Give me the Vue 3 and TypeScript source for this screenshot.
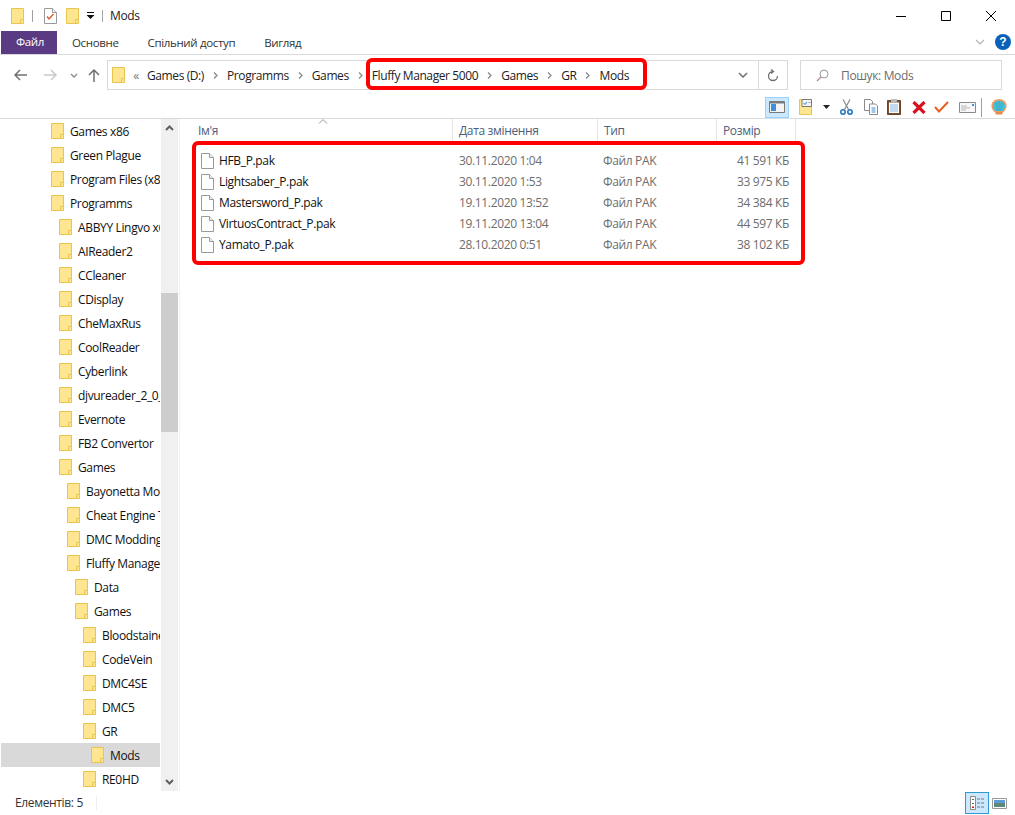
<script setup lang="ts">
// --- Données de l'explorateur ---
interface TreeItem {
  name: string
  level: number
  selected?: boolean
}

const treeItems: TreeItem[] = [
  { name: 'Games x86', level: 0 },
  { name: 'Green Plague', level: 0 },
  { name: 'Program Files (x86)', level: 0 },
  { name: 'Programms', level: 0 },
  { name: 'ABBYY Lingvo x6', level: 1 },
  { name: 'AIReader2', level: 1 },
  { name: 'CCleaner', level: 1 },
  { name: 'CDisplay', level: 1 },
  { name: 'CheMaxRus', level: 1 },
  { name: 'CoolReader', level: 1 },
  { name: 'Cyberlink', level: 1 },
  { name: 'djvureader_2_0_8', level: 1 },
  { name: 'Evernote', level: 1 },
  { name: 'FB2 Convertor', level: 1 },
  { name: 'Games', level: 1 },
  { name: 'Bayonetta Mods', level: 2 },
  { name: 'Cheat Engine Tables', level: 2 },
  { name: 'DMC Modding', level: 2 },
  { name: 'Fluffy Manager 5000', level: 2 },
  { name: 'Data', level: 3 },
  { name: 'Games', level: 3 },
  { name: 'Bloodstained', level: 4 },
  { name: 'CodeVein', level: 4 },
  { name: 'DMC4SE', level: 4 },
  { name: 'DMC5', level: 4 },
  { name: 'GR', level: 4 },
  { name: 'Mods', level: 5, selected: true },
  { name: 'RE0HD', level: 4 },
]

const files = [
  { name: 'HFB_P.pak', date: '30.11.2020 1:04', type: 'Файл PAK', size: '41 591 КБ' },
  { name: 'Lightsaber_P.pak', date: '30.11.2020 1:53', type: 'Файл PAK', size: '33 975 КБ' },
  { name: 'Mastersword_P.pak', date: '19.11.2020 13:52', type: 'Файл PAK', size: '34 384 КБ' },
  { name: 'VirtuosContract_P.pak', date: '19.11.2020 13:04', type: 'Файл PAK', size: '44 597 КБ' },
  { name: 'Yamato_P.pak', date: '28.10.2020 0:51', type: 'Файл PAK', size: '38 102 КБ' },
]

const crumbs = ['Games (D:)', 'Programms', 'Games', 'Fluffy Manager 5000', 'Games', 'GR', 'Mods']
const tabs = ['Основне', 'Спільний доступ', 'Вигляд']

// décalage de l'arborescence : 8px par niveau
function indent(level: number) {
  return { paddingLeft: `${50 + level * 8}px` }
}
</script>

<template>
  <div class="window">
    <!-- symboles réutilisés -->
    <svg class="defs" width="0" height="0">
      <symbol id="folder" viewBox="0 0 13 16">
        <path d="M.5.5h12v15H.5z" fill="#fde68f" stroke="#e9c44f" />
        <path d="M9.5 15.500v-4h3" fill="none" stroke="#e9c44f" />
      </symbol>
      <symbol id="file" viewBox="0 0 13 16">
        <path d="M.5.5h8l4 4v11H.5z" fill="#fff" stroke="#9a9a9a" />
        <path d="M8.500.5v4h4" fill="#f0f0f0" stroke="#9a9a9a" />
      </symbol>
    </svg>

    <!-- barre de titre -->
    <header class="titlebar">
      <svg class="ico-folder"><use href="#folder" /></svg>
      <span class="qsep first"></span>
      <svg class="qnote" width="13" height="16" viewBox="0 0 13 16">
        <use href="#file" />
        <path d="M3 8.500l2 2.500L9.500 6" fill="none" stroke="#e0562a" stroke-width="1.300" />
      </svg>
      <svg class="ico-folder qfolder"><use href="#folder" /></svg>
      <svg class="qdrop" width="9" height="8" viewBox="0 0 9 8">
        <path d="M1 0h7v1H1zM.5 3h8L4.500 7z" fill="#111" />
      </svg>
      <span class="qsep second"></span>
      <span class="title">Mods</span>
      <div class="winctl">
        <svg width="12" height="12" viewBox="0 0 12 12"><path d="M1 6.500h10" stroke="#000" /></svg>
        <svg width="12" height="12" viewBox="0 0 12 12"><path d="M1.500 1.500h9v9h-9z" fill="none" stroke="#000" /></svg>
        <svg width="12" height="12" viewBox="0 0 12 12"><path d="M1 1l10 10M11 1L1 11" stroke="#000" /></svg>
      </div>
    </header>

    <!-- onglets du ruban -->
    <nav class="tabs">
      <span class="tab-file">Файл</span>
      <span v-for="tab in tabs" :key="tab" class="tab">{{ tab }}</span>
      <svg class="ribbon-chev" width="10" height="6" viewBox="0 0 10 6">
        <path d="M1 1l4 4 4-4" fill="none" stroke="#b5b5b5" stroke-width="1.200" />
      </svg>
      <span class="help">?</span>
    </nav>

    <!-- navigation, adresse et recherche -->
    <div class="addressrow">
      <div class="navbtns">
        <svg width="13" height="12" viewBox="0 0 13 12"><path d="M6 1L1 6l5 5M1 6h12" fill="none" stroke="#707070" stroke-width="1.500" /></svg>
        <svg class="nav-fwd" width="13" height="12" viewBox="0 0 13 12"><path d="M7 1l5 5-5 5M12 6H0" fill="none" stroke="#c9c9c9" stroke-width="1.500" /></svg>
        <svg class="nav-down" width="8" height="5" viewBox="0 0 8 5"><path d="M1 1l3 3 3-3" fill="none" stroke="#8a8a8a" stroke-width="1.300" /></svg>
        <svg class="nav-up" width="12" height="13" viewBox="0 0 12 13"><path d="M1 6l5-5 5 5M6 1v12" fill="none" stroke="#707070" stroke-width="1.500" /></svg>
      </div>
      <div class="addressbox">
        <svg class="ico-folder addr-folder"><use href="#folder" /></svg>
        <span class="overflow">«</span>
        <template v-for="(crumb, i) in crumbs" :key="i">
          <span class="crumb">{{ crumb }}</span>
          <span v-if="i < crumbs.length - 1" class="crumb-sep">
            <svg width="5" height="7" viewBox="0 0 5 7"><path d="M1 .5l3 3-3 3" fill="none" stroke="#8a8a8a" stroke-width="1.300" /></svg>
          </span>
        </template>
        <svg class="addr-chev" width="10" height="6" viewBox="0 0 10 6"><path d="M1 1l4 4 4-4" fill="none" stroke="#707070" stroke-width="1.500" /></svg>
        <span class="addr-refresh">
          <svg width="12" height="13" viewBox="0 0 12 13"><path d="M6 2.500a4.500 4.500 0 1 0 4.500 4.500M4 .5l2.500 2L4 4.500" fill="none" stroke="#707070" stroke-width="1.300" /></svg>
        </span>
      </div>
      <div class="searchbox">
        <svg width="13" height="13" viewBox="0 0 13 13"><circle cx="8" cy="5" r="4" fill="none" stroke="#9a9a9a" /><path d="M5 8l-4 4" stroke="#b58a8a" stroke-width="1.200" /></svg>
        <span>Пошук: Mods</span>
      </div>
    </div>

    <!-- barre d'outils -->
    <div class="toolbar">
      <span class="tool-active">
        <svg width="16" height="12" viewBox="0 0 16 12">
          <path d="M.5.500h15v11H.5z" fill="#f4f4f4" stroke="#7a7a7a" />
          <path d="M1 1h14v1.500H1z" fill="#7a7a7a" />
          <path d="M2 3h5v7H2z" fill="#3c8ee0" />
        </svg>
      </span>
      <svg class="t-props" width="13" height="16" viewBox="0 0 13 16">
        <path d="M.5.500h12v15H.5z" fill="#fde68f" stroke="#e9c44f" />
        <path d="M3 .5h9.500v7H3z" fill="#f4f4f4" stroke="#7a7a7a" />
        <path d="M4.500 4l1.500 1.500L8 3" fill="none" stroke="#2f7fd0" />
        <path d="M9.500 3.500h2" stroke="#9a9a9a" />
      </svg>
      <svg class="t-drop" width="7" height="4" viewBox="0 0 7 4"><path d="M0 0h7L3.500 4z" fill="#222" /></svg>
      <svg class="t-scissors" width="13" height="16" viewBox="0 0 13 16">
        <path d="M3 .5l5.500 10M10 .5L4.500 10.500" stroke="#8a8f96" stroke-width="1.300" fill="none" />
        <circle cx="3" cy="13" r="2.200" fill="none" stroke="#1e6fc0" stroke-width="1.500" />
        <circle cx="10" cy="13" r="2.200" fill="none" stroke="#1e6fc0" stroke-width="1.500" />
      </svg>
      <svg class="t-copy" width="14" height="16" viewBox="0 0 14 16">
        <path d="M.5.500h6l2 2v9h-8z" fill="#fff" stroke="#8a8a8a" />
        <path d="M5.500 5h6l2 2v8.500h-8z" fill="#fff" stroke="#8a8a8a" />
        <path d="M7.500 9h4M7.500 11h4M7.500 13h4" stroke="#3c8ee0" />
      </svg>
      <svg class="t-paste" width="14" height="16" viewBox="0 0 14 16">
        <path d="M.5 1.500h13v14H.5z" fill="#7b5135" stroke="#6a4329" />
        <path d="M2 3.500h10v10.500H2z" fill="#fff" />
        <path d="M3 6h8M3 8h8M3 10h8M3 12h8" stroke="#8ab4dc" />
        <path d="M4 0h6v3H4z" fill="#bcbcbc" />
      </svg>
      <svg class="t-del" width="14" height="13" viewBox="0 0 14 13"><path d="M1.500 1l11 11M12.500 1l-11 11" stroke="#d8131f" stroke-width="3.200" /></svg>
      <svg class="t-check" width="15" height="12" viewBox="0 0 15 12"><path d="M1 6l4 4.500L14 1" fill="none" stroke="#ea5f1f" stroke-width="2" /></svg>
      <svg class="t-mail" width="17" height="11" viewBox="0 0 17 11">
        <path d="M.5.500h16v10H.5z" fill="#f8f8f8" stroke="#8a8a8a" />
        <path d="M13 2h2v2h-2z" fill="#3c8ee0" />
        <path d="M2 4h6M2 6h9M2 8h5" stroke="#b5b5b5" />
      </svg>
      <span class="t-sep"></span>
      <svg class="t-shell" width="16" height="16" viewBox="0 0 16 16">
        <path d="M3 1.500Q5 0 8 0t5 1.500Q15 3 15.500 5.500 16 8 14.500 10.500L12.500 13h-9l-2-2.500Q0 8 .5 5.500 1 3 3 1.500z" fill="#ef9a62" />
        <path d="M4 3Q8 .5 12 3q2.500 2.500 2 5.500L12 12H4L2 8.500Q1.500 5.500 4 3z" fill="#45c1d6" />
        <path d="M8 2v10M5 3l1.500 9M11 3l-1.500 9" stroke="#2ea5bd" stroke-width=".7" />
        <path d="M4 13h8l-1 2.500H5z" fill="#e98a4e" />
      </svg>
    </div>

    <main class="main">
      <!-- arborescence -->
      <aside class="tree">
        <div
          v-for="(item, i) in treeItems"
          :key="i"
          class="tree-row"
          :class="{ selected: item.selected }"
          :style="indent(item.level)"
        >
          <svg class="ico-folder"><use href="#folder" /></svg>
          <span>{{ item.name }}</span>
        </div>
      </aside>
      <div class="scrollbar">
        <svg class="sb-up" width="9" height="6" viewBox="0 0 9 6"><path d="M1 5l3.500-3.500L8 5" fill="none" stroke="#606060" stroke-width="2" /></svg>
        <div class="sb-thumb"></div>
        <svg class="sb-down" width="9" height="6" viewBox="0 0 9 6"><path d="M1 1l3.500 3.500L8 1" fill="none" stroke="#606060" stroke-width="2" /></svg>
      </div>

      <!-- liste des fichiers -->
      <section class="list">
        <svg class="sort" width="10" height="5" viewBox="0 0 10 5"><path d="M1 4.500l4-4 4 4" fill="none" stroke="#9a9a9a" /></svg>
        <div class="list-head cols">
          <span>Ім'я</span>
          <span>Дата змінення</span>
          <span>Тип</span>
          <span>Розмір</span>
        </div>
        <div v-for="file in files" :key="file.name" class="file-row cols">
          <span class="file-name">
            <svg class="ico-file"><use href="#file" /></svg>
            {{ file.name }}
          </span>
          <span>{{ file.date }}</span>
          <span class="file-type">{{ file.type }}</span>
          <span class="file-size">{{ file.size }}</span>
        </div>
      </section>
    </main>

    <!-- barre d'état -->
    <footer class="status">
      <span class="count">Елементів: 5</span>
      <span class="view-active">
        <svg width="14" height="14" viewBox="0 0 14 14">
          <path d="M.5.500h5v13h-5z" fill="#fff" stroke="#8a8a8a" />
          <path d="M2 3h2v1H2zM2 7h2v1H2z" fill="#666" />
          <path d="M2 10.500h2v1.500H2z" fill="#d8131f" />
          <path d="M7 3h3M11 3h3M7 7h3M11 7h3M7 11h3M11 11h3" stroke="#777" />
        </svg>
      </span>
      <svg class="view-thumb" width="15" height="11" viewBox="0 0 15 11">
        <path d="M.5.500h14v10H.5z" fill="#fff" stroke="#9a9a9a" />
        <path d="M2 2h11v3H2z" fill="#5b9bd8" />
        <path d="M2 5h11v4H2z" fill="#5d8a78" />
      </svg>
    </footer>

    <!-- cadres rouges ajoutés sur la capture -->
    <div class="mark mark-address"></div>
    <div class="mark mark-files"></div>
  </div>
</template>

<style scoped>
.window {
  position: relative;
  width: 1015px;
  height: 815px;
  overflow: hidden;
  display: flex;
  flex-direction: column;
  background: #fff;
  color: #1a1a1a;
  font-family: "Open Sans", "Liberation Sans", sans-serif;
  font-size: 12px;
  letter-spacing: -0.35px;
}

.defs {
  position: absolute;
}

.ico-folder {
  width: 13px;
  height: 16px;
  flex: none;
}

.ico-file {
  width: 13px;
  height: 16px;
  flex: none;
}

/* barre de titre */
.titlebar {
  height: 31px;
  display: flex;
  align-items: center;
  padding-left: 11px;
  box-sizing: border-box;
}

.qsep {
  width: 1px;
  height: 12px;
  background: #a0a0a0;
}

.qsep.first {
  margin-left: 8px;
}

.qnote {
  margin-left: 11px;
}

.qfolder {
  margin-left: 9px;
}

.qdrop {
  margin-left: 7px;
}

.qsep.second {
  margin-left: 7px;
}

.title {
  margin-left: 7px;
  color: #222;
}

.winctl {
  margin-left: auto;
  display: flex;
  gap: 33px;
  padding-right: 18px;
}

/* onglets */
.tabs {
  height: 24px;
  display: flex;
  align-items: center;
  border-bottom: 1px solid #dadbdc;
  box-sizing: border-box;
  padding-left: 1px;
  color: #333;
  font-size: 11.5px;
}

.tab-file {
  width: 56px;
  height: 23px;
  line-height: 22px;
  padding-left: 15px;
  box-sizing: border-box;
  background: #5a3a82;
  color: #fff;
}

.tab {
  margin-left: 15px;
  margin-right: 14px;
}

.ribbon-chev {
  margin-left: auto;
  margin-top: -2px;
}

.help {
  width: 16px;
  height: 16px;
  margin: -2px 4px 0 10px;
  border-radius: 50%;
  background: #0a61b8;
  color: #fff;
  font: bold 12px/16px "Liberation Sans", sans-serif;
  letter-spacing: 0;
  text-align: center;
}

/* adresse */
.addressrow {
  height: 41px;
  display: flex;
  align-items: flex-start;
  padding-top: 5px;
  box-sizing: border-box;
}

.navbtns {
  width: 107px;
  height: 30px;
  display: flex;
  align-items: center;
  padding-left: 14px;
  box-sizing: border-box;
}

.nav-fwd {
  margin-left: 17px;
}

.nav-down {
  margin-left: 13px;
}

.nav-up {
  margin-left: 10px;
}

.addressbox {
  width: 681px;
  height: 30px;
  display: flex;
  align-items: center;
  border: 1px solid #d9d9d9;
  box-sizing: border-box;
  color: #222;
}

.addr-folder {
  margin-left: 4px;
}

.overflow {
  width: 22px;
  text-align: center;
  color: #777;
}

.crumb {
  white-space: nowrap;
  letter-spacing: -0.4px;
}

.crumb-sep {
  width: 23px;
  display: flex;
  justify-content: center;
}

.addr-chev {
  margin-left: auto;
}

.addr-refresh {
  width: 29px;
  height: 28px;
  margin-left: 10px;
  border-left: 1px solid #d9d9d9;
  display: flex;
  align-items: center;
  justify-content: center;
  box-sizing: border-box;
}

.searchbox {
  width: 202px;
  height: 30px;
  margin-left: 12px;
  display: flex;
  align-items: center;
  gap: 12px;
  padding-left: 15px;
  border: 1px solid #d9d9d9;
  box-sizing: border-box;
  color: #6d6d6d;
}

/* barre d'outils */
.toolbar {
  height: 23px;
  display: flex;
  align-items: center;
  border-bottom: 1px solid #dadbdc;
  box-sizing: border-box;
  padding-left: 765px;
}

.tool-active {
  width: 24px;
  height: 21px;
  display: flex;
  align-items: center;
  justify-content: center;
  background: #cce8ff;
  border: 1px solid #99d1ff;
  box-sizing: border-box;
}

.t-props { margin-left: 10px; }
.t-drop { margin-left: 11px; }
.t-scissors { margin-left: 10px; }
.t-copy { margin-left: 11px; }
.t-paste { margin-left: 9px; }
.t-del { margin-left: 11px; }
.t-check { margin-left: 8px; }
.t-mail { margin-left: 10px; }
.t-sep {
  width: 1px;
  height: 19px;
  margin-left: 5px;
  background: #a0a0a0;
}
.t-shell { margin-left: 9px; }

/* contenu principal */
.main {
  flex: 1;
  min-height: 0;
  display: flex;
}

.tree {
  width: 159px;
  margin-left: 1px;
  overflow: hidden;
}

.tree-row {
  height: 24px;
  display: flex;
  align-items: center;
  gap: 6px;
  box-sizing: border-box;
  white-space: nowrap;
  color: #111;
}

.tree-row.selected {
  background: #d9d9d9;
}

.scrollbar {
  position: relative;
  width: 17px;
  margin-left: 1px;
  background: #f0f0f0;
  margin-right: 1px;
}

.sb-thumb {
  position: absolute;
  top: 174px;
  left: 0;
  right: 0;
  height: 139px;
  background: #cdcdcd;
}

.sb-up,
.sb-down {
  position: absolute;
  left: 4px;
}

.sb-up {
  top: 6px;
}

.sb-down {
  bottom: 6px;
}

.list {
  position: relative;
  flex: 1;
  border-left: 1px solid #f0f0f0;
}

.sort {
  position: absolute;
  left: 138px;
  top: 0;
}

.cols {
  display: grid;
  grid-template-columns: 272px 145px 119px 80px;
}

.list-head {
  height: 31px;
  align-items: start;
  color: #4c607a;
}

.list-head span {
  height: 24px;
  line-height: 24px;
  padding-left: 6px;
  border-left: 1px solid #e5e5e5;
  box-sizing: border-box;
}

.list-head span:first-child {
  padding-left: 18px;
  border-left: none;
}

.list-head span:last-child {
  border-right: 1px solid #e5e5e5;
}

.file-row {
  height: 21px;
  align-items: center;
  color: #6d6d6d;
}

.file-row span {
  padding-left: 7px;
}

.file-row .file-name {
  display: flex;
  align-items: center;
  gap: 5px;
  padding-left: 21px;
  color: #111;
}

.file-row .file-type {
  padding-left: 6px;
}

.file-row .file-size {
  padding: 0 7px 0 0;
  text-align: right;
}

/* barre d'état */
.status {
  height: 24px;
  display: flex;
  align-items: center;
  box-sizing: border-box;
  padding-left: 15px;
  color: #333;
}

.count {
  padding-right: 13px;
  border-right: 1px solid #eee;
  line-height: 14px;
}

.view-active {
  width: 24px;
  height: 22px;
  margin-left: auto;
  display: flex;
  align-items: center;
  justify-content: center;
  background: #cce8ff;
  border: 1px solid #2f9bd6;
  box-sizing: border-box;
}

.view-thumb {
  margin: 0 8px 0 3px;
}

/* cadres rouges */
.mark {
  position: absolute;
  border: 4px solid #f00;
  border-radius: 6px;
  box-sizing: border-box;
}

.mark-address {
  left: 366px;
  top: 58px;
  width: 281px;
  height: 32px;
}

.mark-files {
  left: 192px;
  top: 141px;
  width: 613px;
  height: 124px;
}
</style>
